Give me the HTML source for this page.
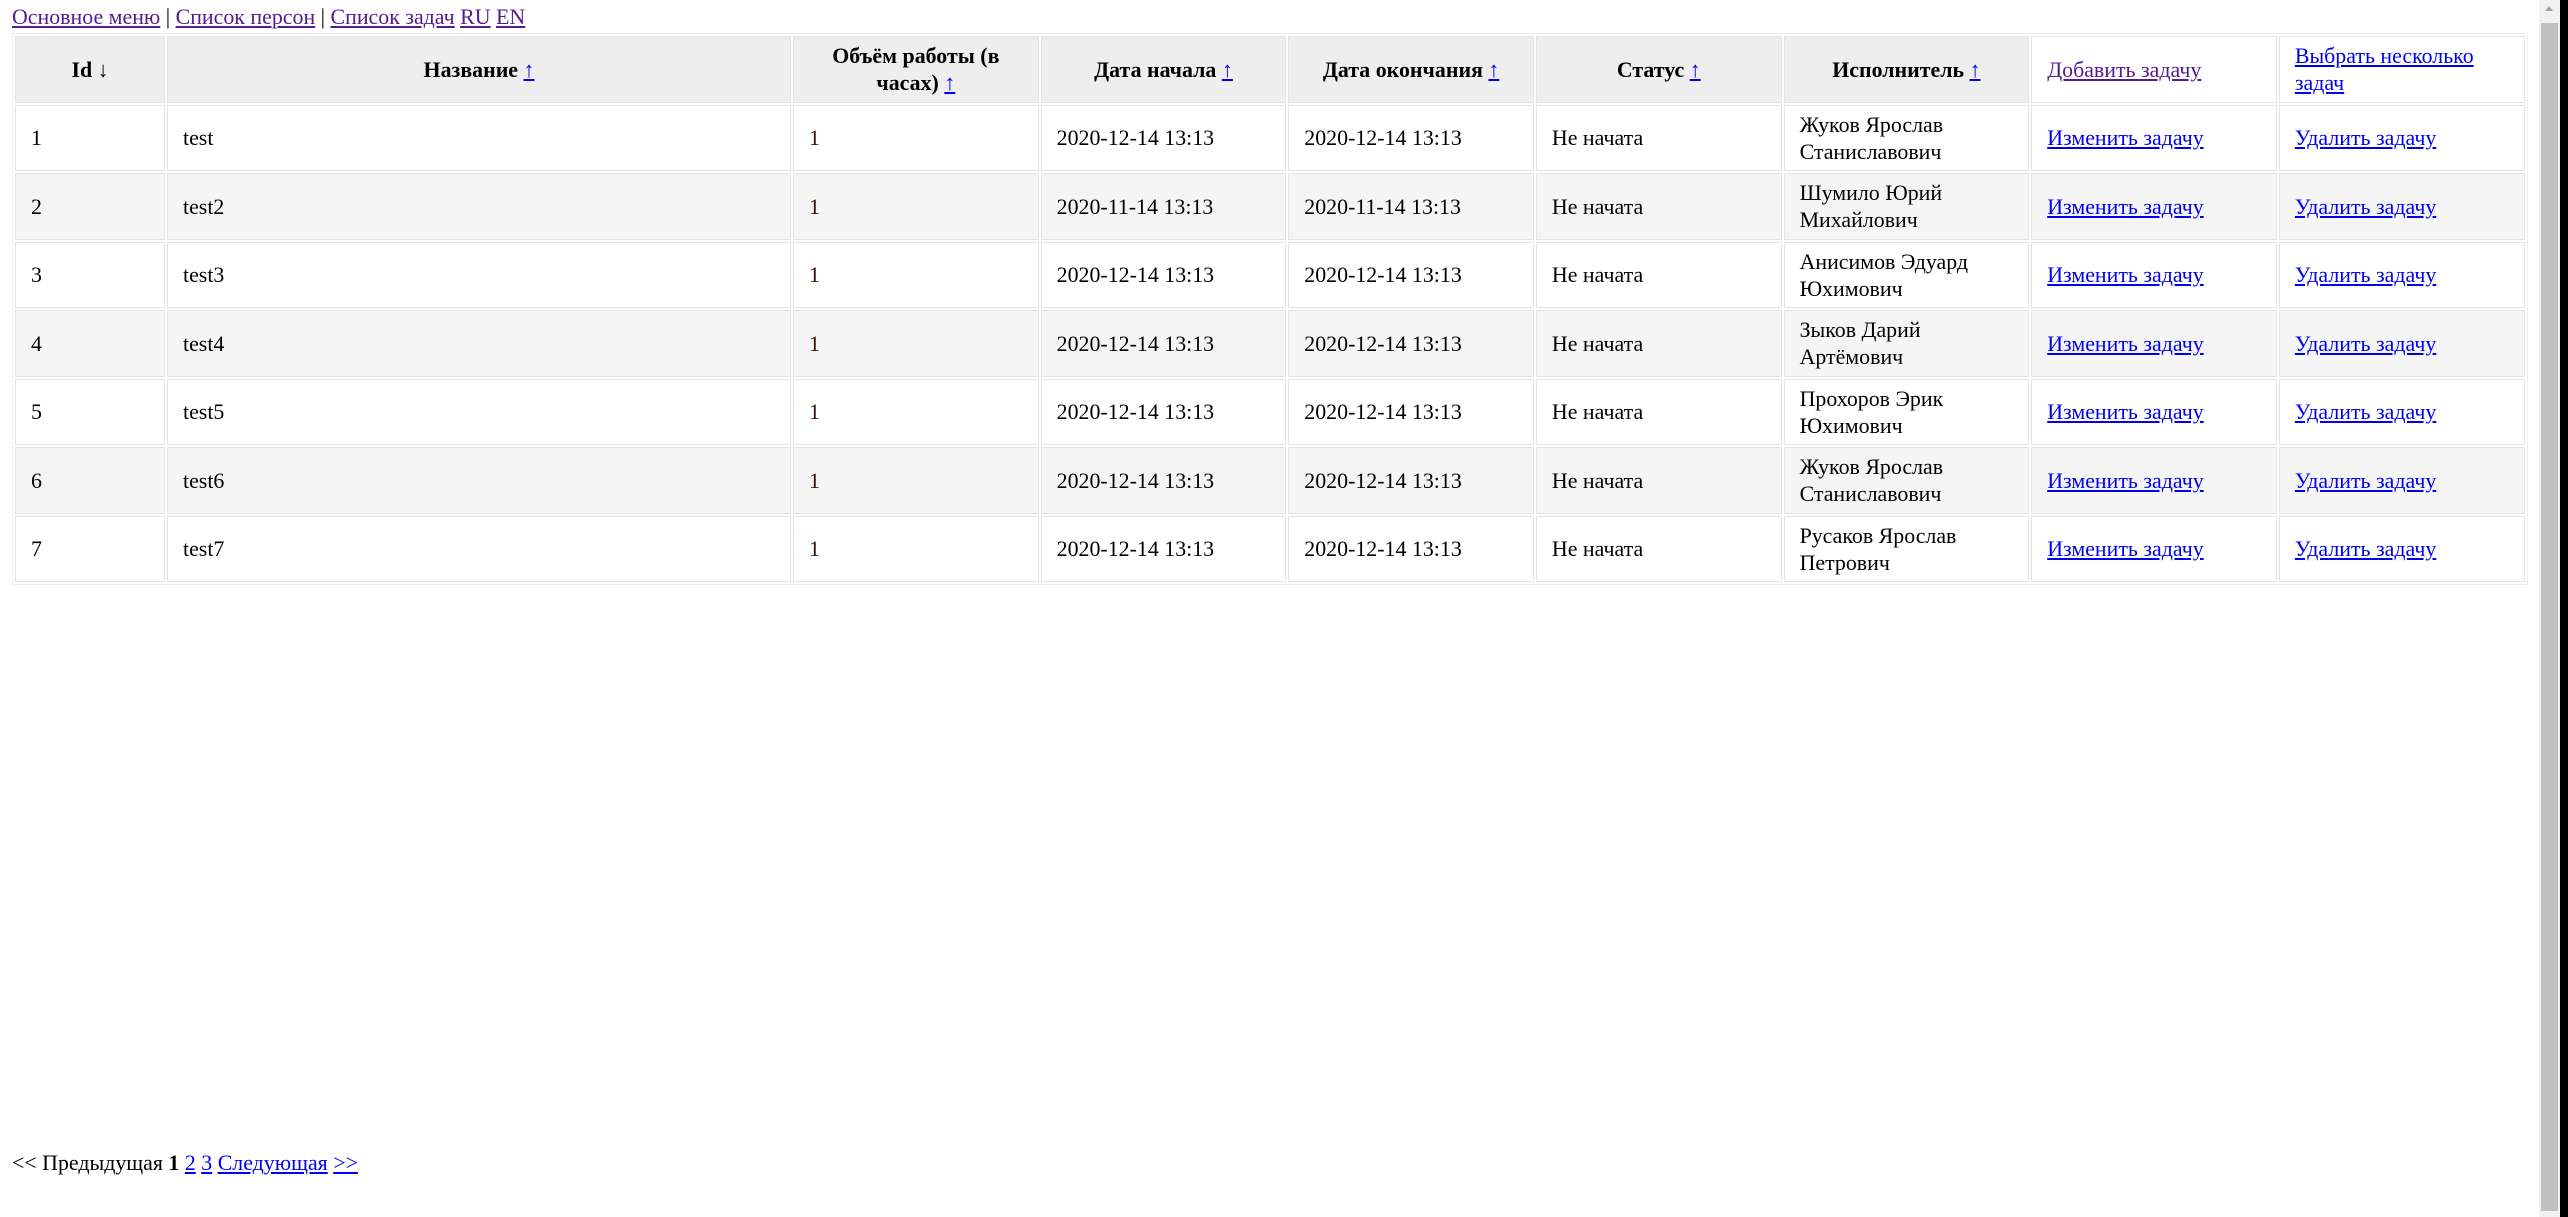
<!DOCTYPE html>
<html><head><meta charset="utf-8">
<style>
html,body{margin:0;padding:0;background:#fff;overflow:hidden}
#wrap{zoom:1.5;width:1693px;height:811px;position:relative;font-family:"Liberation Serif",serif;font-size:14.6px;color:#000}
#nav{padding:2px 8px 0 8px;height:19px;line-height:18px}
a{color:#0000ee}
a.v{color:#551a8b}
table{margin:1px 8px 0 8px;width:1677px;table-layout:fixed;border:1px solid #eee;border-spacing:1.5px;font-size:14.6px}
td,th{border:1px solid #e4e4e4;padding:3px 10px;height:37px;line-height:18px;vertical-align:middle;text-align:left;font-weight:normal}
th{background:#eee;font-weight:bold;text-align:center}
th.l{background:#fff;font-weight:normal;text-align:left}
tr:nth-child(odd) td{background:#f5f5f5}
.br{color:#3a0e00}
#pg{position:absolute;left:8px;top:766px;line-height:18px}
#sb{position:absolute;right:0;top:0;width:29px;height:1217px;background:#000}
#tr{position:absolute;left:0;top:0;width:21px;height:1217px;background:#f1f1f1}
#th{position:absolute;left:2px;top:23px;width:17px;height:1188px;background:#c1c1c1}
#ar{position:absolute;left:6px;top:6px;width:0;height:0;border-left:4px solid transparent;border-right:4px solid transparent;border-bottom:5px solid #a3a3a3}
</style></head><body>
<div id="wrap">
<div id="nav"><a class="v" href="#">Основное меню</a> | <a class="v" href="#">Список персон</a> | <a class="v" href="#">Список задач</a> <a class="v" href="#">RU</a> <a class="v" href="#">EN</a></div>
<table>
<colgroup><col style="width:100px"><col style="width:416px"><col><col><col><col><col><col><col></colgroup>
<tr><th>Id ↓</th><th>Название <a href="#">↑</a></th><th>Объём работы (в часах) <a href="#">↑</a></th><th>Дата начала <a href="#">↑</a></th><th>Дата окончания <a href="#">↑</a></th><th>Статус <a href="#">↑</a></th><th>Исполнитель <a href="#">↑</a></th><th class="l"><a class="v" href="#">Добавить задачу</a></th><th class="l"><a href="#">Выбрать несколько задач</a></th></tr>
<tr><td>1</td><td>test</td><td class="br">1</td><td>2020-12-14 13:13</td><td>2020-12-14 13:13</td><td>Не начата</td><td>Жуков Ярослав Станиславович</td><td><a href="#">Изменить задачу</a></td><td><a href="#">Удалить задачу</a></td></tr>
<tr><td>2</td><td>test2</td><td class="br">1</td><td>2020-11-14 13:13</td><td>2020-11-14 13:13</td><td>Не начата</td><td>Шумило Юрий Михайлович</td><td><a href="#">Изменить задачу</a></td><td><a href="#">Удалить задачу</a></td></tr>
<tr><td>3</td><td>test3</td><td class="br">1</td><td>2020-12-14 13:13</td><td>2020-12-14 13:13</td><td>Не начата</td><td>Анисимов Эдуард Юхимович</td><td><a href="#">Изменить задачу</a></td><td><a href="#">Удалить задачу</a></td></tr>
<tr><td>4</td><td>test4</td><td class="br">1</td><td>2020-12-14 13:13</td><td>2020-12-14 13:13</td><td>Не начата</td><td>Зыков Дарий Артёмович</td><td><a href="#">Изменить задачу</a></td><td><a href="#">Удалить задачу</a></td></tr>
<tr><td>5</td><td>test5</td><td class="br">1</td><td>2020-12-14 13:13</td><td>2020-12-14 13:13</td><td>Не начата</td><td>Прохоров Эрик Юхимович</td><td><a href="#">Изменить задачу</a></td><td><a href="#">Удалить задачу</a></td></tr>
<tr><td>6</td><td>test6</td><td class="br">1</td><td>2020-12-14 13:13</td><td>2020-12-14 13:13</td><td>Не начата</td><td>Жуков Ярослав Станиславович</td><td><a href="#">Изменить задачу</a></td><td><a href="#">Удалить задачу</a></td></tr>
<tr><td>7</td><td>test7</td><td class="br">1</td><td>2020-12-14 13:13</td><td>2020-12-14 13:13</td><td>Не начата</td><td>Русаков Ярослав Петрович</td><td><a href="#">Изменить задачу</a></td><td><a href="#">Удалить задачу</a></td></tr>
</table>
<div id="pg">&lt;&lt; Предыдущая <b>1</b> <a href="#">2</a> <a href="#">3</a> <a href="#">Следующая</a> <a href="#">&gt;&gt;</a></div>
</div>
<div id="sb"><div id="tr"><div id="ar"></div><div id="th"></div></div></div>
</body></html>
